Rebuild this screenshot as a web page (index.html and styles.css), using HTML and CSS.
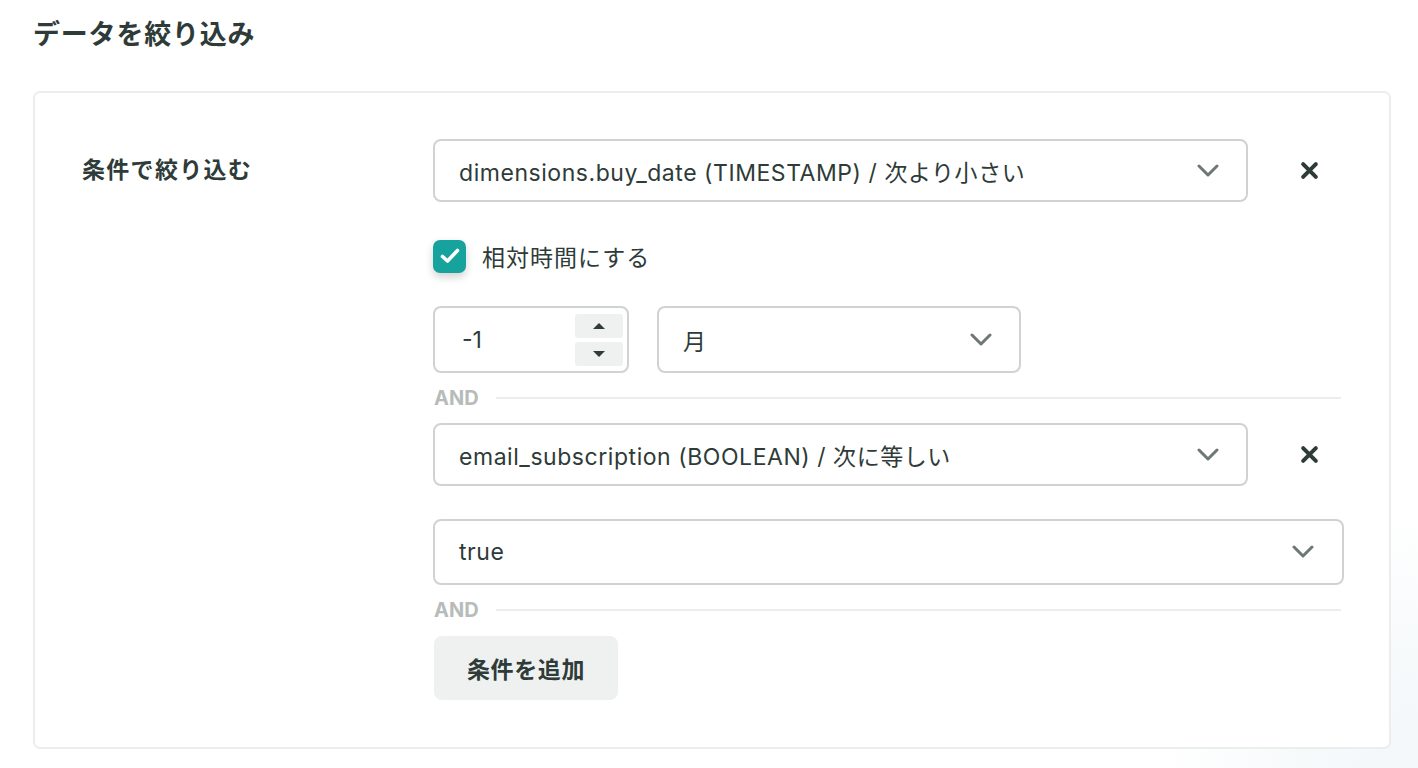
FILE: index.html
```html
<!DOCTYPE html>
<html lang="ja">
<head>
<meta charset="utf-8">
<link rel="stylesheet" href="styles.css">
</head>
<body>
<div class="page">
  <h1 class="title">データを絞り込み</h1>
  <div class="card">
    <div class="label">条件で絞り込む</div>
    <div class="content">
      <div class="cond-row">
        <div class="select sel-main">
          <span>dimensions.buy_date (TIMESTAMP) / 次より小さい</span>
          <svg class="chev" viewBox="0 0 22 14"><path d="M2 2 L11 11 L20 2" fill="none" stroke="#6d7775" stroke-width="3" stroke-linecap="round" stroke-linejoin="round"/></svg>
        </div>
        <div class="remove">
          <svg viewBox="0 0 18 18"><path d="M3 3 L15 15 M15 3 L3 15" stroke="#2e3b38" stroke-width="3.8" stroke-linecap="round"/></svg>
        </div>
      </div>
      <label class="check">
        <span class="box"><svg viewBox="0 0 22 22"><path d="M3.5 11.5 L8.5 16 L18.5 5.5" fill="none" stroke="#fff" stroke-width="3.6" stroke-linecap="round" stroke-linejoin="round"/></svg></span>
        <span class="check-text">相対時間にする</span>
      </label>
      <div class="rel-row">
        <div class="number">
          <span class="num-val">-1</span>
          <div class="spin">
            <div class="spin-btn"><svg viewBox="0 0 14 8"><path d="M1 7 L7 1 L13 7 Z" fill="#2e3b38"/></svg></div>
            <div class="spin-btn"><svg viewBox="0 0 14 8"><path d="M1 1 L7 7 L13 1 Z" fill="#2e3b38"/></svg></div>
          </div>
        </div>
        <div class="select sel-unit">
          <span>月</span>
          <svg class="chev" viewBox="0 0 22 14"><path d="M2 2 L11 11 L20 2" fill="none" stroke="#6d7775" stroke-width="3" stroke-linecap="round" stroke-linejoin="round"/></svg>
        </div>
      </div>
      <div class="and"><span>AND</span><i></i></div>
      <div class="cond-row">
        <div class="select sel-main">
          <span>email_subscription (BOOLEAN) / 次に等しい</span>
          <svg class="chev" viewBox="0 0 22 14"><path d="M2 2 L11 11 L20 2" fill="none" stroke="#6d7775" stroke-width="3" stroke-linecap="round" stroke-linejoin="round"/></svg>
        </div>
        <div class="remove">
          <svg viewBox="0 0 18 18"><path d="M3 3 L15 15 M15 3 L3 15" stroke="#2e3b38" stroke-width="3.8" stroke-linecap="round"/></svg>
        </div>
      </div>
      <div class="select sel-full">
        <span>true</span>
        <svg class="chev" viewBox="0 0 22 14"><path d="M2 2 L11 11 L20 2" fill="none" stroke="#6d7775" stroke-width="3" stroke-linecap="round" stroke-linejoin="round"/></svg>
      </div>
      <div class="and and-last"><span>AND</span><i></i></div>
      <button class="add">条件を追加</button>
    </div>
  </div>
</div>
</body>
</html>
```

FILE: styles.css
```css
* { box-sizing: border-box; }
html, body {
  margin: 0;
  padding: 0;
  background: #ffffff;
}
body {
  font-family: Inter, "Noto Sans CJK JP", sans-serif;
  color: #2e3b38;
  width: 1418px;
  height: 768px;
  overflow: hidden;
  background: radial-gradient(circle at 1418px 768px, #f3f7fa 0, #f7fafb 120px, #ffffff 260px);
}
.page {
  padding: 17px 27px 0 33px;
}
.title {
  margin: 0;
  font-size: 27px;
  font-weight: 700;
  line-height: 36px;
  letter-spacing: 0.8px;
}
.card {
  margin-top: 38px;
  width: 1358px;
  height: 658px;
  border: 2px solid #eceeed;
  border-radius: 7px;
  background: #fff;
  display: flex;
  padding: 46px 46px 0 47px;
}
.label {
  width: 351px;
  flex: none;
  font-size: 23px;
  font-weight: 700;
  line-height: 28px;
  padding-top: 17px;
  letter-spacing: 1.3px;
}
.content {
  width: 910px;
  display: flex;
  flex-direction: column;
}
.cond-row {
  display: flex;
  align-items: center;
}
.select {
  display: flex;
  align-items: center;
  justify-content: space-between;
  border: 2px solid #cfd3d2;
  border-radius: 8px;
  background: #fff;
  font-size: 23px;
  letter-spacing: 0.55px;
  padding: 0 27px 0 24px;
  height: 63px;
}
.select span { white-space: nowrap; }
.chev {
  width: 22px;
  height: 14px;
  flex: none;
}
.sel-main { width: 815px; }
.remove {
  width: 95px;
  display: flex;
  justify-content: flex-end;
  padding-right: 24px;
}
.remove svg { width: 19px; height: 19px; display: block; }
.check {
  display: flex;
  align-items: center;
  margin-top: 37px;
  height: 34px;
}
.box {
  width: 33px;
  height: 33px;
  border-radius: 7px;
  background: #16a39d;
  display: flex;
  align-items: center;
  justify-content: center;
  box-shadow: 0 4px 8px rgba(0, 0, 0, 0.18);
}
.box svg { width: 22px; height: 22px; display: block; }
.check-text {
  margin-left: 16px;
  font-size: 23px;
  letter-spacing: 1px;
}
.rel-row {
  display: flex;
  gap: 28px;
  margin-top: 33px;
}
.number {
  width: 196px;
  height: 67px;
  border: 2px solid #cfd3d2;
  border-radius: 8px;
  display: flex;
  align-items: center;
  justify-content: space-between;
  padding: 0 4px 0 27px;
  font-size: 23px;
}
.spin {
  display: flex;
  flex-direction: column;
  gap: 4px;
}
.spin-btn {
  width: 48px;
  height: 24px;
  background: #eff1f0;
  border-radius: 3px;
  display: flex;
  align-items: center;
  justify-content: center;
}
.spin-btn svg { width: 14px; height: 8px; }
.sel-unit {
  width: 364px;
  height: 67px;
}
.and {
  display: flex;
  align-items: center;
  height: 18px;
  margin: 16px 0 16px;
}
.and-last {
  margin: 16px 0 17px;
}
.and span {
  font-size: 20px;
  font-weight: 700;
  color: #b7bbba;
  margin-left: 1px;
}
.and i {
  flex: 1;
  height: 2px;
  background: #eceeed;
  margin-left: 17px;
  margin-right: 2px;
}
.sel-full {
  width: 911px;
  height: 66px;
  margin-top: 33px;
  padding-right: 28px;
}
.add {
  align-self: flex-start;
  width: 184px;
  height: 64px;
  margin-left: 1px;
  border: none;
  border-radius: 8px;
  background: #eff1f0;
  font-family: Inter, "Noto Sans CJK JP", sans-serif;
  font-size: 23px;
  letter-spacing: 0.6px;
  font-weight: 700;
  color: #2e3b38;
  padding: 0;
}
```
